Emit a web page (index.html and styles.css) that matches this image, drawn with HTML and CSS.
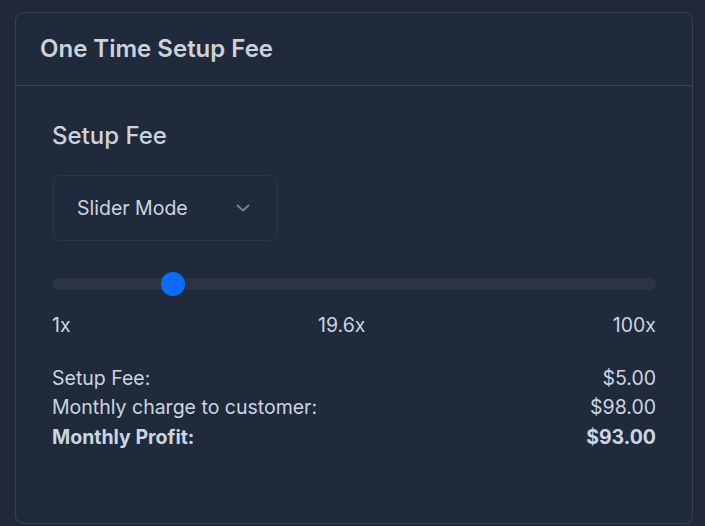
FILE: index.html
```html
<!DOCTYPE html>
<html lang="en">
<head>
<meta charset="utf-8">
<title>One Time Setup Fee</title>
<link rel="stylesheet" href="styles.css">
</head>
<body>
<section class="card">
  <header class="card-header">
    <h2 class="card-title">One Time Setup Fee</h2>
  </header>
  <div class="card-body">
    <h3 class="section-title">Setup Fee</h3>
    <button class="select" type="button">
      <span class="select-label">Slider Mode</span>
      <svg class="chevron" width="14" height="8" viewBox="0 0 14 8" aria-hidden="true">
        <path d="M1.5 1.5 L7 6.5 L12.5 1.5" fill="none" stroke="currentColor" stroke-width="1.7" stroke-linecap="round" stroke-linejoin="round"/>
      </svg>
    </button>
    <input class="range" type="range" min="1" max="100" step="0.1" value="19.6">
    <div class="range-labels">
      <span>1x</span>
      <span>19.6x</span>
      <span>100x</span>
    </div>
    <dl class="summary">
      <div class="summary-row"><dt>Setup Fee:</dt><dd>$5.00</dd></div>
      <div class="summary-row"><dt>Monthly charge to customer:</dt><dd>$98.00</dd></div>
      <div class="summary-row total"><dt>Monthly Profit:</dt><dd>$93.00</dd></div>
    </dl>
  </div>
</section>
</body>
</html>
```
FILE: styles.css
```css
* { box-sizing: border-box; }
html, body { margin: 0; }
body {
  background: #1f2937;
  font-family: Inter, "Noto Sans", sans-serif;
  color: #cbd5e1;
  padding: 12px 13px 0 15px;
  height: 526px;
  overflow: hidden;
}
.card {
  width: 678px;
  height: 512px;
  border: 1px solid #364152;
  border-radius: 8px;
  background: #1f2a3b;
}
.card-header {
  padding: 19px 24px;
  border-bottom: 1px solid #364152;
}
.card-title {
  margin: 0;
  font-size: 24px;
  line-height: 34px;
  font-weight: 600;
  color: #cdd2da;
}
.card-body {
  padding: 34px 36px 0 36px;
}
.section-title {
  margin: 0;
  font-size: 24px;
  line-height: 32px;
  font-weight: 500;
  color: #cdd2da;
}
.select {
  margin-top: 23px;
  width: 225px;
  height: 66px;
  display: flex;
  align-items: center;
  justify-content: space-between;
  padding: 0 26px 0 24px;
  background: transparent;
  border: 1px solid #2c3646;
  border-radius: 8px;
  font-family: inherit;
  font-size: 19.5px;
  color: #cbd5e1;
}
.chevron { color: #7b8494; }
.range {
  -webkit-appearance: none;
  appearance: none;
  display: block;
  width: 100%;
  height: 24px;
  margin: 31px 0 0 0;
  background: transparent;
}
.range::-webkit-slider-runnable-track {
  height: 12px;
  border-radius: 6px;
  background: #2b3445;
}
.range::-webkit-slider-thumb {
  -webkit-appearance: none;
  width: 24px;
  height: 24px;
  margin-top: -6px;
  border-radius: 50%;
  background: #0b6dff;
  border: none;
}
.range-labels {
  display: flex;
  justify-content: space-between;
  margin-top: 15px;
  font-size: 19.5px;
  line-height: 28.8px;
}
.summary {
  margin: 24px 0 0 0;
}
.summary-row {
  display: flex;
  justify-content: space-between;
  font-size: 19.5px;
  line-height: 29.5px;
}
.summary-row dt, .summary-row dd { margin: 0; }
.summary-row.total { font-weight: 700; }
```
